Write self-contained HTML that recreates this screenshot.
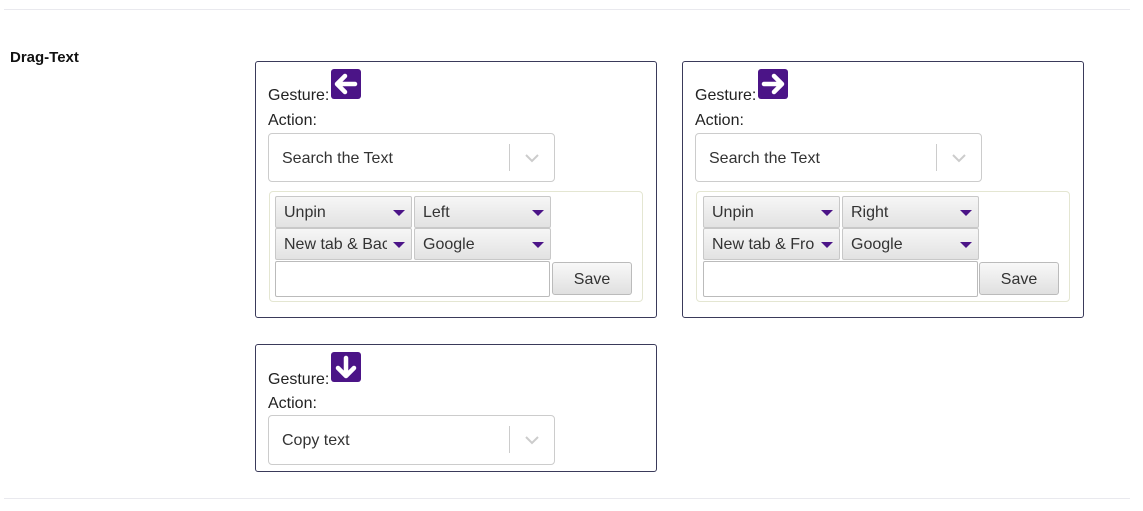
<!DOCTYPE html>
<html><head><meta charset="utf-8"><style>
*{box-sizing:border-box;margin:0;padding:0}
body{width:1143px;height:511px;background:#fff;font-family:"Liberation Sans",Arial,sans-serif;color:#222;position:relative;overflow:hidden}
.abs{position:absolute}
.line{position:absolute;left:4px;width:1126px;height:1px;background:#e9e9ee}
.card{position:absolute;border:1px solid #3a3a5a;border-radius:3px;background:#fff}
.lbl{position:absolute;font-size:16px;color:#222}
.icon{position:absolute;width:30px;height:30px;background:#4b1487;border-radius:3px}
.sel{position:absolute;border:1px solid #ccc;border-radius:4px;background:#fff;font-size:16px;color:#333}
.sel .t{position:absolute;left:13px;top:16px}
.sel .sep{position:absolute;left:240px;top:10px;width:1px;height:27px;background:#ccc}
.sel svg{position:absolute;left:255px;top:19px}
.panel{position:absolute;border:1px solid #e4e6d2;border-radius:4px}
.dd{position:absolute;height:32px;width:137px;border:1px solid #c8c8c8;border-radius:2px;background:linear-gradient(#f6f6f6,#e2e2e2);font-size:16px;color:#333;padding:7px 0 0 8px;white-space:nowrap;overflow:hidden}
.dd i{position:absolute;right:6px;top:13px;width:0;height:0;border-left:6px solid transparent;border-right:6px solid transparent;border-top:6px solid #4b1487}
.dd span{display:block;width:103px;overflow:hidden}
.inp{position:absolute;border:1px solid #bbb;background:#fff;border-radius:2px}
.btn{position:absolute;border:1px solid #bbb;border-radius:3px;background:linear-gradient(#f8f8f8,#e0e0e0);font-size:16px;color:#333;text-align:center;padding-top:8px}
</style></head><body>
<div class="line" style="top:9px"></div>
<div class="line" style="top:498px"></div>
<div class="abs" style="left:10px;top:49px;font-size:15px;font-weight:bold;color:#111">Drag-Text</div>

<div class="card" style="left:255px;top:61px;width:402px;height:257px"></div>
<div class="lbl" style="left:268px;top:87px">Gesture:</div>
<div class="icon" style="left:331px;top:69px"><svg width="30" height="30" viewBox="0 0 30 30"><path d="M24 15H7M14 7L6 15L14 23" stroke="#fff" stroke-width="4.5" fill="none" stroke-linecap="round" stroke-linejoin="round"/></svg></div>
<div class="lbl" style="left:268px;top:112px">Action:</div>
<div class="sel" style="left:268px;top:133px;width:287px;height:49px"><span class="t">Search the Text</span><span class="sep"></span><svg width="16" height="10"><path d="M2 2L8 8L14 2" stroke="#ccc" stroke-width="2" fill="none"/></svg></div>
<div class="panel" style="left:269px;top:191px;width:374px;height:111px"></div>
<div class="dd" style="left:275px;top:196px"><span>Unpin</span><i></i></div>
<div class="dd" style="left:414px;top:196px"><span>Left</span><i></i></div>
<div class="dd" style="left:275px;top:228px"><span>New tab &amp; Background</span><i></i></div>
<div class="dd" style="left:414px;top:228px"><span>Google</span><i></i></div>
<div class="inp" style="left:275px;top:261px;width:275px;height:36px"></div>
<div class="btn" style="left:552px;top:262px;width:80px;height:33px">Save</div>

<div class="card" style="left:682px;top:61px;width:402px;height:257px"></div>
<div class="lbl" style="left:695px;top:87px">Gesture:</div>
<div class="icon" style="left:758px;top:69px"><svg width="30" height="30" viewBox="0 0 30 30"><path d="M6 15H23M16 7L24 15L16 23" stroke="#fff" stroke-width="4.5" fill="none" stroke-linecap="round" stroke-linejoin="round"/></svg></div>
<div class="lbl" style="left:695px;top:112px">Action:</div>
<div class="sel" style="left:695px;top:133px;width:287px;height:49px"><span class="t">Search the Text</span><span class="sep"></span><svg width="16" height="10"><path d="M2 2L8 8L14 2" stroke="#ccc" stroke-width="2" fill="none"/></svg></div>
<div class="panel" style="left:696px;top:191px;width:374px;height:111px"></div>
<div class="dd" style="left:703px;top:196px"><span>Unpin</span><i></i></div>
<div class="dd" style="left:842px;top:196px"><span>Right</span><i></i></div>
<div class="dd" style="left:703px;top:228px"><span>New tab &amp; Front</span><i></i></div>
<div class="dd" style="left:842px;top:228px"><span>Google</span><i></i></div>
<div class="inp" style="left:703px;top:261px;width:275px;height:36px"></div>
<div class="btn" style="left:979px;top:262px;width:80px;height:33px">Save</div>

<div class="card" style="left:255px;top:344px;width:402px;height:128px"></div>
<div class="lbl" style="left:268px;top:371px">Gesture:</div>
<div class="icon" style="left:331px;top:352px"><svg width="30" height="30" viewBox="0 0 30 30"><path d="M15 6V23M7 16L15 24L23 16" stroke="#fff" stroke-width="4.5" fill="none" stroke-linecap="round" stroke-linejoin="round"/></svg></div>
<div class="lbl" style="left:268px;top:395px">Action:</div>
<div class="sel" style="left:268px;top:415px;width:287px;height:50px"><span class="t">Copy text</span><span class="sep"></span><svg width="16" height="10"><path d="M2 2L8 8L14 2" stroke="#ccc" stroke-width="2" fill="none"/></svg></div>
</body></html>
